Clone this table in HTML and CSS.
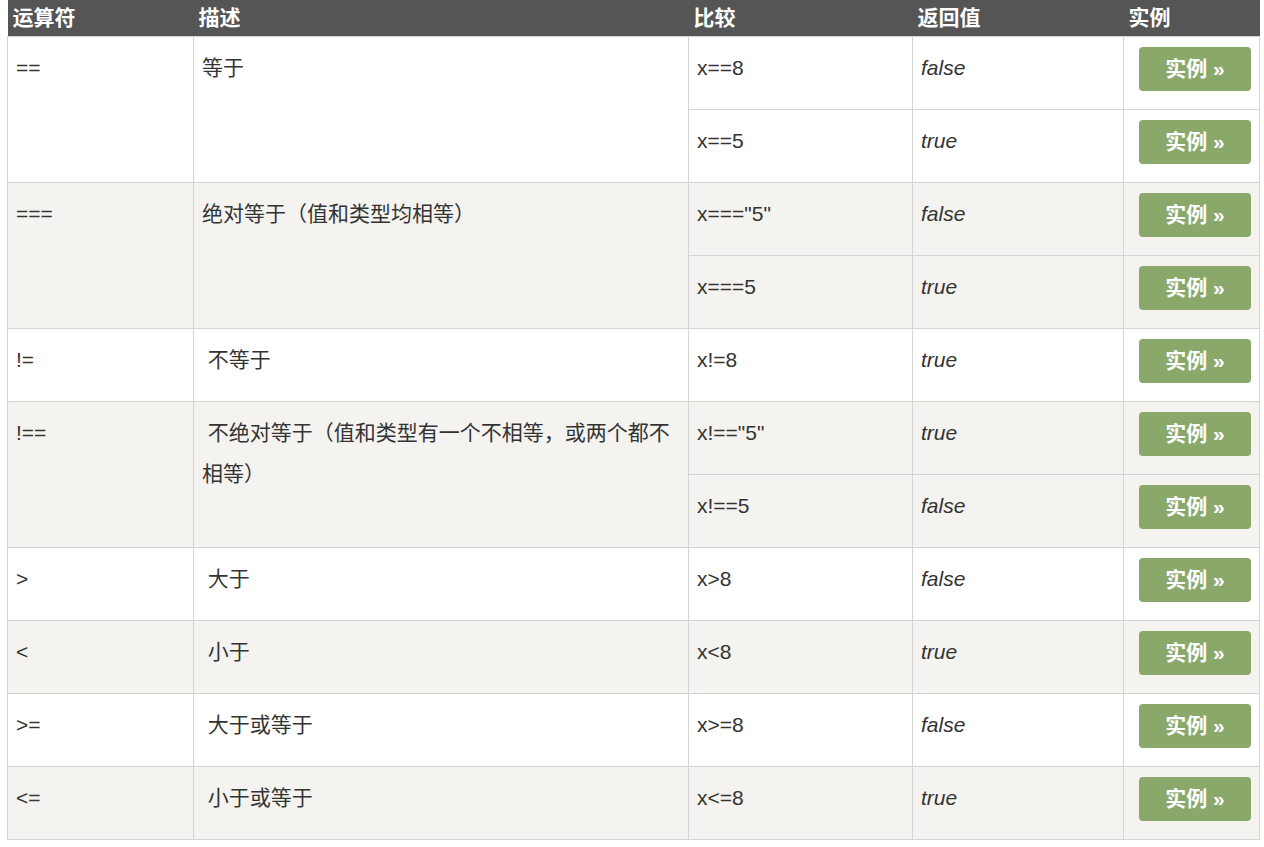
FILE: index.html
```html
<!DOCTYPE html>
<html lang="zh-CN">
<head>
<meta charset="utf-8">
<title>比较运算符</title>
<link rel="stylesheet" href="styles.css">
</head>
<body>
<table class="ops">
  <colgroup>
    <col class="c-op"><col class="c-desc"><col class="c-cmp"><col class="c-ret"><col class="c-ex">
  </colgroup>
  <thead>
    <tr><th>运算符</th><th>描述</th><th>比较</th><th>返回值</th><th>实例</th></tr>
  </thead>
  <tbody>
    <tr class="w"><td rowspan="2">==</td><td rowspan="2">等于</td><td>x==8</td><td class="ret">false</td><td><a class="btn">实例 »</a></td></tr>
    <tr class="w"><td>x==5</td><td class="ret">true</td><td><a class="btn">实例 »</a></td></tr>
    <tr class="g"><td rowspan="2">===</td><td rowspan="2">绝对等于（值和类型均相等）</td><td>x==="5"</td><td class="ret">false</td><td><a class="btn">实例 »</a></td></tr>
    <tr class="g"><td>x===5</td><td class="ret">true</td><td><a class="btn">实例 »</a></td></tr>
    <tr class="w"><td>!=</td><td>&nbsp;不等于</td><td>x!=8</td><td class="ret">true</td><td><a class="btn">实例 »</a></td></tr>
    <tr class="g"><td rowspan="2">!==</td><td rowspan="2">&nbsp;不绝对等于（值和类型有一个不相等，或两个都不相等）</td><td>x!=="5"</td><td class="ret">true</td><td><a class="btn">实例 »</a></td></tr>
    <tr class="g"><td>x!==5</td><td class="ret">false</td><td><a class="btn">实例 »</a></td></tr>
    <tr class="w"><td>&gt;</td><td>&nbsp;大于</td><td>x&gt;8</td><td class="ret">false</td><td><a class="btn">实例 »</a></td></tr>
    <tr class="g"><td>&lt;</td><td>&nbsp;小于</td><td>x&lt;8</td><td class="ret">true</td><td><a class="btn">实例 »</a></td></tr>
    <tr class="w"><td>&gt;=</td><td>&nbsp;大于或等于</td><td>x&gt;=8</td><td class="ret">false</td><td><a class="btn">实例 »</a></td></tr>
    <tr class="g"><td>&lt;=</td><td>&nbsp;小于或等于</td><td>x&lt;=8</td><td class="ret">true</td><td><a class="btn">实例 »</a></td></tr>
  </tbody>
</table>
</body>
</html>
```

FILE: styles.css
```css
html, body {
  margin: 0;
  padding: 0;
  background: #fff;
}
body {
  font-family: "Liberation Sans", Arial, "Noto Sans CJK SC", sans-serif;
  font-size: 21px;
  color: #333;
}
.ops {
  margin-left: 7px;
  width: 1252px;
  table-layout: fixed;
  border-collapse: collapse;
}
.c-op { width: 186px; }
.c-desc { width: 495px; }
.c-cmp { width: 224px; }
.c-ret { width: 211px; }
.c-ex { width: 136px; }

.ops th {
  background: #555;
  color: #fff;
  font-weight: bold;
  text-align: left;
  height: 36px;
  line-height: 36px;
  padding: 0 5px;
  border: 0;
}
.ops td {
  border: 1px solid #d4d4d4;
  padding: 10px 8px;
  line-height: 41px;
  vertical-align: top;
}
.ops tr.w td { background: #fff; }
.ops tr.g td { background: #f4f3f0; }
.ret { font-style: italic; }

.btn {
  display: block;
  width: 112px;
  height: 44px;
  margin: 0 0 8px auto;
  background: #8ba86b;
  color: #fff;
  font-weight: bold;
  text-align: center;
  line-height: 44px;
  border-radius: 4px;
  cursor: pointer;
}
```
